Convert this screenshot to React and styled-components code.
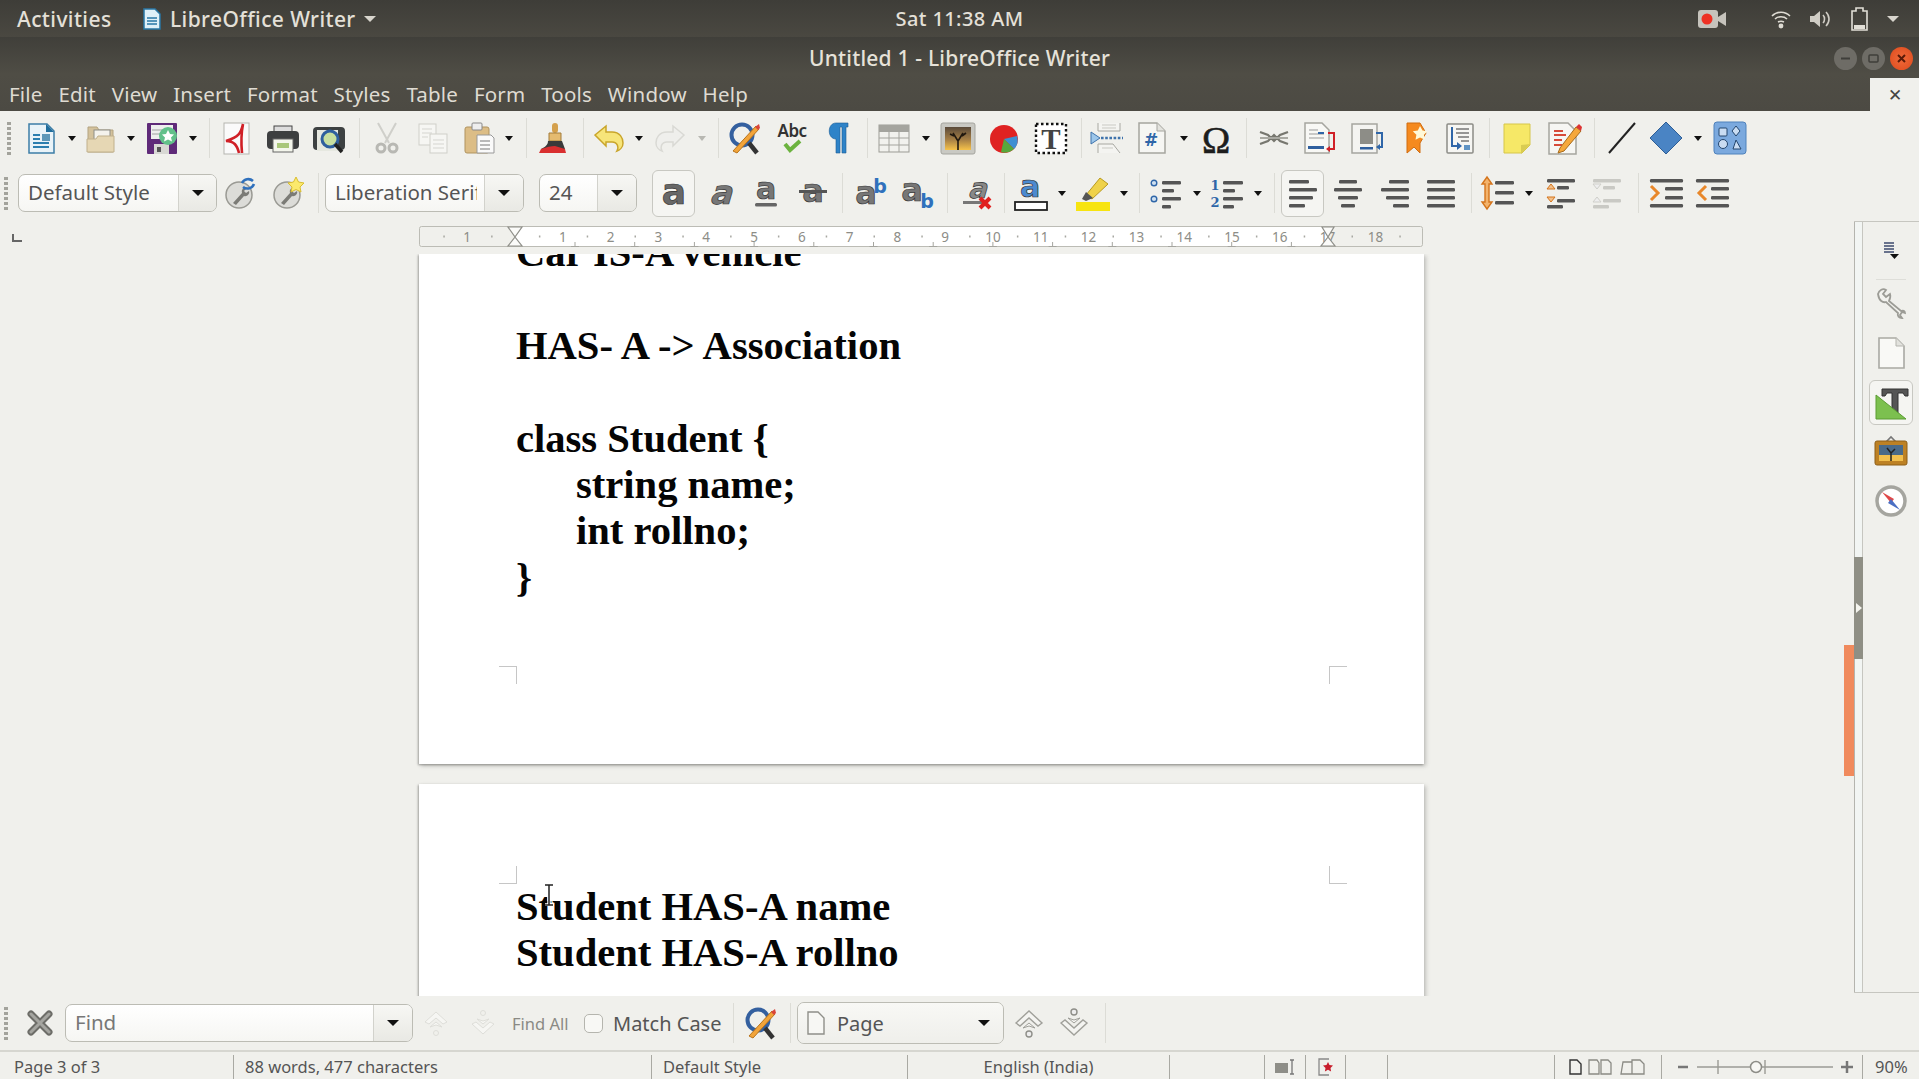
import React from "react";
import styled, { createGlobalStyle } from "styled-components";

const UI_FONT = `"Noto Sans", "Open Sans", sans-serif`;

const GlobalStyle = createGlobalStyle`
  html, body { margin: 0; padding: 0; background: #f0f0ec; }
  body { font-family: ${UI_FONT}; }
`;

const Screen = styled.div`
  width: 1919px;
  height: 1079px;
  display: flex;
  flex-direction: column;
  overflow: hidden;
  background: #f0f0ec;
`;

const TopBar = styled.div`
  height: 37px;
  flex: none;
  position: relative;
  display: flex;
  align-items: center;
  background: linear-gradient(#3e3d38, #4a4841);
  color: #e4e0d8;
  font-size: 21px;
  font-weight: 500;
  letter-spacing: 0.4px;
`;
const Activities = styled.div`
  margin-left: 17px;
  width: 125px;
`;
const AppMenu = styled.div`
  display: flex;
  align-items: center;
  gap: 8px;
`;
const Clock = styled.div`
  position: absolute;
  left: 0;
  right: 0;
  top: 5px;
  text-align: center;
  font-size: 20px;
`;
const Tray = styled.div`
  margin-left: auto;
  display: flex;
  align-items: center;
  padding-right: 20px;
`;
const TrayItem = styled.div`
  margin-left: ${(p) => p.$gap}px;
  display: flex;
`;
const DownArrow = styled.div`
  width: 0;
  height: 0;
  border-left: ${(p) => p.$size}px solid transparent;
  border-right: ${(p) => p.$size}px solid transparent;
  border-top: ${(p) => p.$size}px solid ${(p) => p.$color || "#d8d5cd"};
`;

const WindowHead = styled.div`
  flex: none;
  background: linear-gradient(#403f3a, #4f4d45 50%, #4c4a43);
  position: relative;
  height: 74px;
  display: flex;
  flex-direction: column;
`;
const TitleRow = styled.div`
  height: 41px;
  display: flex;
  align-items: center;
  justify-content: center;
  color: #e6e2d9;
  font-size: 21px;
  font-weight: 500;
  letter-spacing: 0.2px;
`;
const WinButtons = styled.div`
  position: absolute;
  top: 10px;
  left: 1834px;
  display: flex;
  gap: 5px;
`;
const WinButton = styled.div`
  width: 23px;
  height: 23px;
  border-radius: 50%;
  background: ${(p) => (p.$close ? "radial-gradient(#f06a3a, #dd4a1c)" : "#6e6c66")};
  display: flex;
  align-items: center;
  justify-content: center;
`;
const MenuRow = styled.div`
  height: 33px;
  display: flex;
  align-items: center;
  padding: 0 0 2px 9px;
  box-sizing: border-box;
  gap: 15.8px;
  color: #dfdbd2;
  font-size: 20.5px;
  letter-spacing: 0.2px;
`;
const CloseTab = styled.div`
  position: absolute;
  right: 0;
  bottom: 0;
  width: 49px;
  height: 33px;
  background: #f0f0ec;
  color: #444;
  display: flex;
  align-items: center;
  justify-content: center;
  font-size: 17px;
`;

const ToolStrip = styled.div`
  height: ${(p) => p.$h}px;
  flex: none;
  display: flex;
  align-items: center;
`;
const Slot = styled.div`
  flex: none;
  width: ${(p) => p.$w}px;
  margin-left: ${(p) => p.$gap}px;
  display: flex;
  align-items: center;
  justify-content: center;
  box-sizing: border-box;
  ${(p) =>
    p.$active &&
    `height: 47px;
     border: 1.5px solid #c8c8c2;
     border-radius: 6px;
     background: #f5f5f2;`}
`;
const Separator = styled.div`
  flex: none;
  width: 1px;
  height: 40px;
  margin-left: ${(p) => p.$gap}px;
  background: #dcdcd6;
`;
const Grip = styled.div`
  flex: none;
  width: 4px;
  height: 33px;
  margin-left: ${(p) => p.$gap}px;
  background: repeating-linear-gradient(#a3a39c 0 3px, transparent 3px 5px);
`;
const Caret = styled.div`
  flex: none;
  margin-left: ${(p) => p.$gap}px;
  width: 0;
  height: 0;
  border-left: 4px solid transparent;
  border-right: 4px solid transparent;
  border-top: 5px solid ${(p) => (p.$dim ? "#b8b8b2" : "#111")};
`;
const Combo = styled.div`
  flex: none;
  width: ${(p) => p.$w}px;
  height: ${(p) => p.$h || 38}px;
  margin-left: ${(p) => p.$gap}px;
  box-sizing: border-box;
  display: flex;
  border: 1.5px solid #bcbcb4;
  border-radius: 7px;
  background: linear-gradient(#ffffff, #f6f6f3);
  overflow: hidden;
  font-size: 20.5px;
  color: ${(p) => (p.$muted ? "#777" : "#555")};
`;
const ComboValue = styled.div`
  flex: 1;
  min-width: 0;
  margin-left: ${(p) => p.$pad}px;
  margin-right: ${(p) => p.$clip || 0}px;
  white-space: nowrap;
  overflow: hidden;
  line-height: 35px;
`;
const ComboButton = styled.div`
  flex: none;
  width: ${(p) => p.$w}px;
  display: flex;
  align-items: center;
  justify-content: center;
  border-left: 1.5px solid #d2d2cc;
  background: linear-gradient(#f7f7f4, #e9e9e4);
`;
const PageChoice = styled.div`
  display: flex;
  align-items: center;
  flex: 1;
  padding: 0 13px 0 9px;
  gap: 12px;
  font-size: 20px;
  background: linear-gradient(#f8f8f5, #efefeb);
`;
const PushRight = styled.div`
  margin-left: auto;
  display: flex;
`;
const FindLabel = styled.div`
  flex: none;
  margin-left: ${(p) => p.$gap}px;
  width: ${(p) => p.$w}px;
  font-size: ${(p) => p.$size}px;
  color: ${(p) => p.$color};
  white-space: nowrap;
`;
const CheckBox = styled.div`
  flex: none;
  margin-left: ${(p) => p.$gap}px;
  width: ${(p) => p.$w}px;
  height: 19px;
  box-sizing: border-box;
  border: 1.5px solid #b5b5ae;
  border-radius: 5px;
  background: #f8f8f5;
`;

const Lower = styled.div`
  flex: none;
  height: 775px;
  display: flex;
`;
const MainColumn = styled.div`
  width: 1854px;
  display: flex;
  flex-direction: column;
`;
const RulerRow = styled.div`
  height: 33px;
  flex: none;
  display: flex;
  align-items: flex-start;
  padding-top: 5px;
  box-sizing: border-box;
`;
const TabCorner = styled.div`
  width: 8px;
  height: 6px;
  margin: 8px 0 0 12px;
  border-left: 2px solid #666;
  border-bottom: 2px solid #666;
`;
const RulerBox = styled.div`
  margin-left: 397px;
  width: 1004px;
  height: 21px;
`;
const DocArea = styled.div`
  flex: 1;
  position: relative;
  overflow: hidden;
  padding-left: 419px;
  display: flex;
  flex-direction: column;
  gap: 20px;
`;
const Page = styled.div`
  flex: none;
  width: 1005px;
  height: ${(p) => p.$h}px;
  padding-left: 97px;
  box-sizing: border-box;
  position: relative;
  background: #fff;
  box-shadow: -1px 1px 2px rgba(90, 90, 85, 0.5), 2px 2px 4px rgba(90, 90, 85, 0.3);
  font-family: "Liberation Serif", "Times New Roman", serif;
  font-weight: 700;
  font-size: 40.6px;
  line-height: 46.4px;
  color: #050505;
`;
const PageText = styled.div`
  margin-top: ${(p) => p.$top}px;
  ${(p) => p.$clip && "clip-path: inset(24px 0 0 0);"}
`;
const Line = styled.div`
  height: 46.4px;
  white-space: pre;
  padding-left: ${(p) => (p.$indent ? 60 : 0)}px;
`;
const CropMark = styled.div`
  position: absolute;
  width: 17px;
  height: 17px;
  left: ${(p) => p.$x}px;
  top: ${(p) => p.$y}px;
  ${(p) => p.$sides.map((s) => `border-${s}: 1.5px solid #c6c6c6;`).join("")}
`;
const TextCursor = styled.div`
  position: absolute;
  left: 125px;
  top: 100px;
  display: flex;
`;
const OrangeThumb = styled.div`
  position: absolute;
  right: 0;
  top: 391px;
  width: 10px;
  height: 131px;
  background: #f08a5d;
`;

const SidePanel = styled.div`
  flex: 1;
  height: 772px;
  display: flex;
  border-top: 1.5px solid #c6c6c0;
  border-bottom: 1.5px solid #c6c6c0;
  box-sizing: border-box;
`;
const SideStrip = styled.div`
  width: 9px;
  box-sizing: border-box;
  border-left: 1.5px solid #b4b4ae;
  border-right: 1.5px solid #c6c6c0;
  background: #f2f5f3;
  padding-top: 335px;
`;
const SideHandle = styled.div`
  height: 102px;
  margin: 0 -1px;
  background: #8f8f85;
  display: flex;
  align-items: center;
  justify-content: center;
`;
const HandleArrow = styled.div`
  width: 0;
  height: 0;
  border-top: 5px solid transparent;
  border-bottom: 5px solid transparent;
  border-left: 6px solid #f5f5ef;
`;
const SideDeck = styled.div`
  flex: 1;
  display: flex;
  flex-direction: column;
  align-items: center;
`;
const DeckItem = styled.div`
  flex: none;
  width: 44px;
  height: 45px;
  margin-top: ${(p) => p.$gap}px;
  display: flex;
  align-items: center;
  justify-content: center;
  box-sizing: border-box;
  ${(p) =>
    p.$active &&
    `border: 1.5px solid #c8c8c2;
     border-radius: 6px;
     background: #f5f5f2;`}
`;
const DeckRule = styled.div`
  width: 30px;
  height: 1px;
  margin-top: 7px;
  background: #deded9;
`;

const StatusBar = styled.div`
  flex: none;
  height: 29px;
  box-sizing: border-box;
  border-top: 2px solid #d6d6d0;
  display: grid;
  grid-template-columns: 233px 418px 256px 262px 95px 41px 40px 42px 167px 107px 201px 1fr;
  font-size: 16.5px;
  color: #555;
`;
const StatusCell = styled.div`
  display: flex;
  align-items: center;
  justify-content: ${(p) => (p.$center ? "center" : "flex-start")};
  padding-left: ${(p) => p.$pad || 0}px;
  padding-bottom: 2px;
  white-space: nowrap;
  border-left: ${(p) => (p.$first ? "none" : "1.5px solid #a9a9a3")};
  margin-top: 3px;
  box-sizing: border-box;
`;

const Ic = ({ children }) => (
  <svg width="32" height="32" viewBox="0 0 32 32" style={{ overflow: "visible" }}>
    {children}
  </svg>
);

const glyph = { fontFamily: "DejaVu Sans, sans-serif", fontWeight: 700 };

const Letter = ({ size = 36, y = 27, x = 16, fill = "#686868", children, slant }) => (
  <text
    x={x}
    y={y}
    textAnchor="middle"
    fontSize={size}
    fill={fill}
    stroke="#333"
    strokeWidth="0.7"
    transform={slant ? `translate(${y * 0.29} 0) skewX(-16)` : undefined}
    {...glyph}
  >
    {children}
  </text>
);

const Bars = ({ rows, fill = "#555", h = 3.4 }) =>
  rows.map(([x, y, w], i) => <rect key={i} x={x} y={y} width={w} height={h} rx="1.2" fill={fill} />);

const icons = {
  NewDoc: () => (
    <Ic>
      <path d="M4 2h18l7 7v22H4z" fill="#e9f3f8" stroke="#3d7ea6" strokeWidth="1.5" />
      <path d="M21 2l8 8h-8z" fill="#1f6d9c" />
      <path d="M8 13h7M8 17h7M8 21h16M8 25h16" stroke="#2c7fb0" strokeWidth="2" />
      <rect x="17" y="12" width="8" height="7" fill="#5d97b8" />
    </Ic>
  ),
  Open: () => (
    <Ic>
      <path d="M3 5h9l2 3h14v22H3z" fill="#d4c29c" stroke="#b3a380" />
      <rect x="9" y="8" width="16" height="12" fill="#f4f2ec" stroke="#8d8d86" />
      <path d="M2 17h9l2-3h16v16H2z" fill="#e6d7b4" stroke="#c0b08c" />
    </Ic>
  ),
  Save: () => (
    <Ic>
      <rect x="1" y="1" width="30" height="31" rx="1" fill="#5f2a79" />
      <rect x="5" y="3" width="22" height="14" fill="#eee" />
      <path d="M6 8h15M6 12h15" stroke="#bbb" strokeWidth="1.5" />
      <rect x="8" y="22" width="15" height="10" fill="#d8d8d4" />
      <rect x="11" y="25" width="4" height="5" fill="#555" />
      <circle cx="22" cy="14" r="9" fill="#62c08a" />
      <path d="M22 8l2 4 4 .5-3 3 1 4-4-2-4 2 1-4-3-3 4-.5z" fill="#fff" />
    </Ic>
  ),
  Pdf: () => (
    <Ic>
      <rect x="4" y="1" width="25" height="31" fill="#fafafa" stroke="#b5b5b0" />
      <path d="M23 2C21 11 19 15 6 19c8 0 11 4 13 12M23 2c-2 10-2 18-1 29" fill="none" stroke="#d02027" strokeWidth="2.6" />
    </Ic>
  ),
  Print: () => (
    <Ic>
      <rect x="7" y="4" width="18" height="8" fill="#ddd" stroke="#444" />
      <rect x="0" y="9" width="32" height="18" rx="4" fill="#3d3f40" />
      <rect x="6" y="17" width="20" height="13" fill="#f4f6ec" stroke="#666" />
      <rect x="10" y="21" width="12" height="5" fill="#a9c77a" />
    </Ic>
  ),
  Preview: () => (
    <Ic>
      <rect x="0" y="5" width="32" height="23" rx="4" fill="#3d4142" />
      <rect x="4" y="8" width="21" height="21" fill="#e6e8e0" />
      <circle cx="17" cy="17" r="8" fill="#c8dfa0" stroke="#2f5f9e" strokeWidth="3" />
      <path d="M22 22l7 8" stroke="#222" strokeWidth="3.5" />
    </Ic>
  ),
  Cut: () => (
    <Ic>
      <path d="M7 1l11 20M25 1L14 21" stroke="#cfcfca" strokeWidth="2" />
      <circle cx="10" cy="26" r="4" fill="none" stroke="#b8b8b3" strokeWidth="3" />
      <circle cx="22" cy="26" r="4" fill="none" stroke="#b8b8b3" strokeWidth="3" />
    </Ic>
  ),
  Copy: () => (
    <Ic>
      <rect x="2" y="2" width="17" height="21" fill="#f6f6f3" stroke="#cfcfc9" />
      <rect x="13" y="12" width="17" height="19" fill="#f6f6f3" stroke="#cfcfc9" />
      <path d="M5 7h10M5 11h10M5 15h6M16 18h11M16 22h11M16 26h11" stroke="#d5d5d0" />
    </Ic>
  ),
  Paste: () => (
    <Ic>
      <rect x="2" y="5" width="24" height="26" rx="2" fill="#dcbd86" stroke="#b0935f" />
      <rect x="9" y="1" width="10" height="7" rx="1" fill="#eee" stroke="#888" />
      <path d="M14 13h14l3 3v15H14z" fill="#fafafa" stroke="#999" />
      <path d="M17 19h10M17 23h10M17 27h10" stroke="#777" />
    </Ic>
  ),
  Brush: () => (
    <Ic>
      <rect x="14" y="1" width="6" height="10" rx="3" fill="#d4a04c" />
      <path d="M11 11h12v8H11z" fill="#e5bb70" stroke="#a37c3b" />
      <path d="M10 19h14l3 8H3c4-2 7-4 7-8z" fill="#3a3a3a" />
      <path d="M3 27c6-2 10-3 14-3l10 3 1 4H1z" fill="#d92f2f" />
    </Ic>
  ),
  Undo: () => (
    <Ic>
      <path d="M2 13L13 4v6h6c8 0 11 6 11 11 0 4-3 7-6 8 2-3 1-9-5-9h-6v4z" fill="#f7e57a" stroke="#c9a52a" strokeWidth="1.5" />
    </Ic>
  ),
  Redo: () => (
    <Ic>
      <path d="M30 13L19 4v6h-6C5 10 2 16 2 21c0 4 3 7 6 8-2-3-1-9 5-9h6v4z" fill="#efefec" stroke="#d9d9d4" strokeWidth="1.5" />
    </Ic>
  ),
  Find: () => (
    <Ic>
      <circle cx="13" cy="13" r="10.5" fill="none" stroke="#34609f" strokeWidth="4" />
      <path d="M20 21l8 10" stroke="#333" strokeWidth="4.5" />
      <path d="M4 29L27 4l3 3L8 31z" fill="#f2a43a" stroke="#b8741c" />
      <path d="M26 5l4-3 1 4-2 2z" fill="#d9453a" />
    </Ic>
  ),
  Abc: () => (
    <Ic>
      <text x="16" y="15" textAnchor="middle" fontSize="17" letterSpacing="-0.6" fill="#333" fontFamily="Noto Sans, sans-serif" fontWeight="600">
        Abc
      </text>
      <path d="M9 22l5 6 10-9" fill="none" stroke="#6cb33f" strokeWidth="4" />
    </Ic>
  ),
  Pilcrow: () => (
    <Ic>
      <path d="M14 1h12v4h-2v26h-4V5h-2v26h-4V17C5 17 5 1 14 1z" fill="#2e83c8" stroke="#1b5c96" strokeWidth="0.6" />
    </Ic>
  ),
  Table: () => (
    <Ic>
      <rect x="1" y="3" width="30" height="27" fill="#f2f2ee" stroke="#9b9b95" />
      <rect x="1" y="3" width="30" height="7" fill="#a4a49e" />
      <path d="M1 16h30M1 23h30M11 3v27M21 3v27" stroke="#a4a49e" />
    </Ic>
  ),
  Image: () => (
    <Ic>
      <defs>
        <linearGradient id="dusk" x1="0" y1="0" x2="0" y2="1">
          <stop offset="0" stopColor="#5a4a3a" />
          <stop offset="0.55" stopColor="#a67f45" />
          <stop offset="1" stopColor="#f6c24a" />
        </linearGradient>
      </defs>
      <rect x="-1" y="1" width="34" height="31" rx="2" fill="#c9c9c3" stroke="#a5a59f" />
      <rect x="3" y="5" width="26" height="23" fill="url(#dusk)" />
      <path d="M16 28v-9l-5-8M16 19l5-8M12 14l-4-2M20 14l4-3" stroke="#20180f" strokeWidth="1.6" fill="none" />
    </Ic>
  ),
  Chart: () => (
    <Ic>
      <circle cx="16" cy="17" r="14" fill="#df2222" />
      <path d="M16 17l13-3c2 7-1 11-3 13z" fill="#3f8fd2" />
      <path d="M16 17l10 10c-2 2-8 5-13 3z" fill="#57a83c" />
    </Ic>
  ),
  TextBox: () => (
    <Ic>
      <rect x="1" y="2" width="30" height="29" fill="#fff" stroke="#111" strokeWidth="2.4" strokeDasharray="2.5 2.5" />
      <text x="16" y="27" textAnchor="middle" fontSize="29" fontWeight="700" fill="#444" fontFamily="Liberation Serif, serif">
        T
      </text>
    </Ic>
  ),
  PageBreak: () => (
    <Ic>
      <path d="M7 1v8h22V1" fill="#f4f4f1" stroke="#a8a8a2" />
      <path d="M11 3h14M11 6h14" stroke="#c9c9c3" />
      <path d="M7 31v-9h15l7 9" fill="#f4f4f1" stroke="#a8a8a2" />
      <path d="M11 26h11" stroke="#c9c9c3" />
      <path d="M10 16h22" stroke="#3f73ac" strokeWidth="2.4" strokeDasharray="2.6 1.6" />
      <path d="M0 10l9 6-9 6z" fill="#9cc6ea" stroke="#3f73ac" />
    </Ic>
  ),
  Field: () => (
    <Ic>
      <path d="M3 1h18l8 8v22H3z" fill="#f6f6f3" stroke="#a5a59f" strokeWidth="1.5" />
      <path d="M21 1v8h8" fill="#e3e3de" stroke="#a5a59f" />
      <text x="15" y="24" textAnchor="middle" fontSize="17" fill="#2f66a8" fontWeight="700" fontFamily="DejaVu Sans, sans-serif">
        #
      </text>
    </Ic>
  ),
  Omega: () => (
    <Ic>
      <text x="16" y="31" textAnchor="middle" fontSize="38" fill="#1d1d1d" stroke="#1d1d1d" strokeWidth="0.6" fontFamily="Liberation Serif, serif">
        Ω
      </text>
    </Ic>
  ),
  Link: () => (
    <Ic>
      <path d="M2 10l8 3 6 6 6-6 8-3M2 22l8-3 6-6 6 6 8 3" fill="none" stroke="#77776f" strokeWidth="2.2" />
      <path d="M2 16h28" stroke="#a9a9a2" strokeWidth="2" />
    </Ic>
  ),
  Footnote: () => (
    <Ic>
      <path d="M1 1h17l7 7v23H1z" fill="#f8f8f5" stroke="#a5a59f" strokeWidth="1.5" />
      <path d="M5 8h9M5 12h15M5 16h15" stroke="#999" />
      <rect x="14" y="10" width="6" height="2" fill="#2f66a8" />
      <rect x="4" y="24" width="16" height="3" fill="#2f5f9e" />
      <path d="M24 11h6v16h-5" fill="none" stroke="#d02027" strokeWidth="2" />
      <path d="M22 27l4-3v6z" fill="#d02027" />
    </Ic>
  ),
  Endnote: () => (
    <Ic>
      <rect x="1" y="2" width="25" height="29" fill="#f4f4f1" stroke="#a5a59f" strokeWidth="1.5" />
      <rect x="9" y="7" width="13" height="15" fill="#8d8d87" />
      <rect x="9" y="25" width="13" height="2.5" fill="#2f5f9e" />
      <path d="M25 11h6v14h-4" fill="none" stroke="#2f66a8" strokeWidth="2" />
      <path d="M25 25l4-3v6z" fill="#2f66a8" />
    </Ic>
  ),
  Bookmark: () => (
    <Ic>
      <path d="M6 1h13l6 10-6 10v10l-6-6-7 6z" fill="#f58a1f" stroke="#d06c10" />
      <path d="M19 4l2.5 4.5 5 .8-3.6 3.5.9 5-4.8-2.4-4.5 2.4.9-5-3.6-3.5 5-.8z" fill="#fff9d8" />
    </Ic>
  ),
  CrossRef: () => (
    <Ic>
      <rect x="3" y="2" width="26" height="29" rx="1" fill="#f6f6f3" stroke="#8c8c87" strokeWidth="1.5" />
      <path d="M12 7h13M12 11h13M14 15h11M17 19h8" stroke="#777" strokeWidth="1.5" />
      <path d="M8 5v19h6" fill="none" stroke="#2f66a8" strokeWidth="2" />
      <path d="M18 24l-5-4v8z" fill="#2f66a8" />
      <rect x="20" y="23" width="6" height="5" fill="#5f93c4" />
    </Ic>
  ),
  Note: () => (
    <Ic>
      <path d="M3 2h26v21l-8 8H3z" fill="#f6e867" stroke="#d6c64a" />
      <path d="M29 22l-9 1v9z" fill="#d9cc52" />
    </Ic>
  ),
  Track: () => (
    <Ic>
      <path d="M1 1h19l8 8v23H1z" fill="#f6f6f3" stroke="#a5a59f" strokeWidth="1.5" />
      <path d="M6 9h9M6 13h12M6 18h8M6 23h8" stroke="#d64b3a" strokeWidth="2" />
      <path d="M10 31l2-5L28 5l5 4L16 29z" fill="#f5a83c" stroke="#a86c1c" />
      <path d="M28 5l5 4 1-4-3-3z" fill="#d33" />
    </Ic>
  ),
  LineTool: () => (
    <Ic>
      <path d="M3 31L29 1" stroke="#222" strokeWidth="2" />
    </Ic>
  ),
  Diamond: () => (
    <Ic>
      <path d="M16 0l16 16-16 16L0 16z" fill="#4a84c4" stroke="#2e5e96" />
    </Ic>
  ),
  Shapes: () => (
    <Ic>
      <rect x="0" y="0" width="32" height="32" rx="3" fill="#7ba9de" stroke="#4f82bc" />
      <rect x="5" y="6" width="8" height="8" rx="1" fill="#c9dcf2" stroke="#24466e" />
      <path d="M22 4l4 5-4 5-4-5z" fill="#c9dcf2" stroke="#24466e" />
      <circle cx="9" cy="22" r="4.5" fill="#c9dcf2" stroke="#24466e" />
      <path d="M19 27l3-9 5 9z" fill="#c9dcf2" stroke="#24466e" />
    </Ic>
  ),
  StyleUpdate: () => (
    <Ic>
      <circle cx="14" cy="18" r="13" fill="#dcdcd8" stroke="#9a9a94" strokeWidth="1.5" />
      <path d="M8 26l9-10c-1-4 2-6 5-5l-3 3 2 2 3-2c1 3-2 6-5 5l-8 9z" fill="#7b7b76" />
      <path d="M17 6a7 7 0 0 1 11-2M29 7a7 7 0 0 1-11 3" fill="none" stroke="#2f70bc" strokeWidth="2.5" />
    </Ic>
  ),
  StyleNew: () => (
    <Ic>
      <circle cx="14" cy="18" r="13" fill="#dcdcd8" stroke="#9a9a94" strokeWidth="1.5" />
      <path d="M8 26l9-10c-1-4 2-6 5-5l-3 3 2 2 3-2c1 3-2 6-5 5l-8 9z" fill="#7b7b76" />
      <path d="M23 0l2.5 5 5.5 1-4 4 1 5-5-2.500-5 2.500 1-5-4-4 5.500-1z" fill="#fbe96c" stroke="#d9bd30" />
    </Ic>
  ),
  Bold: () => (
    <Ic>
      <Letter>a</Letter>
    </Ic>
  ),
  Italic: () => (
    <Ic>
      <Letter slant size={33} fill="#777">a</Letter>
    </Ic>
  ),
  Under: () => (
    <Ic>
      <Letter size={30} y={22} fill="#777">a</Letter>
      <rect x="5" y="26" width="22" height="3.4" rx="1.5" fill="#666" />
    </Ic>
  ),
  Strike: () => (
    <Ic>
      <Letter size={32} y={25} fill="#777">a</Letter>
      <rect x="2" y="13" width="28" height="3" fill="#555" />
    </Ic>
  ),
  Super: () => (
    <Ic>
      <Letter size={32} x={12} y={27} fill="#777">a</Letter>
      <text x="26" y="16" textAnchor="middle" fontSize="19" fill="#2f70bc" {...glyph}>b</text>
    </Ic>
  ),
  Sub: () => (
    <Ic>
      <Letter size={32} x={12} y={24} fill="#777">a</Letter>
      <text x="27" y="31" textAnchor="middle" fontSize="19" fill="#2f70bc" {...glyph}>b</text>
    </Ic>
  ),
  Clear: () => (
    <Ic>
      <Letter slant size={28} y={21} fill="#888">a</Letter>
      <rect x="2" y="24" width="22" height="3" fill="#777" />
      <path d="M19 21l10 10M29 21L19 31" stroke="#e0201f" strokeWidth="4" />
    </Ic>
  ),
  FontColor: () => (
    <Ic>
      <Letter size={30} y={20} fill="#4b8ad0">a</Letter>
      <rect x="1" y="25" width="32" height="8" fill="#fff" stroke="#222" strokeWidth="1.8" />
    </Ic>
  ),
  Highlight: () => (
    <Ic>
      <path d="M10 18L24 1l8 6-16 15z" fill="#efd24a" stroke="#b99a20" />
      <path d="M6 22l4-7 7 6-7 3z" fill="#555" />
      <rect x="0" y="25" width="34" height="9" fill="#f7e410" />
    </Ic>
  ),
  Bullets: () => (
    <Ic>
      <circle cx="5" cy="6" r="2.8" fill="#cfe0f0" stroke="#2f66a8" strokeWidth="1.4" />
      <circle cx="5" cy="22" r="2.8" fill="#cfe0f0" stroke="#2f66a8" strokeWidth="1.4" />
      <Bars rows={[[13, 4, 19], [13, 12, 12], [13, 20, 19], [13, 28, 9]]} />
    </Ic>
  ),
  Numbers: () => (
    <Ic>
      <text x="4" y="13" textAnchor="middle" fontSize="13" fill="#2f66a8" fontWeight="700" fontFamily="DejaVu Serif, serif">1</text>
      <text x="4" y="30" textAnchor="middle" fontSize="13" fill="#2f66a8" fontWeight="700" fontFamily="DejaVu Serif, serif">2</text>
      <Bars rows={[[12, 4, 20], [12, 12, 12], [12, 20, 20], [12, 28, 11]]} />
    </Ic>
  ),
  AlignLeft: () => (
    <Ic>
      <Bars rows={[[2, 3, 20], [2, 11, 28], [2, 19, 24], [2, 27, 16]]} />
    </Ic>
  ),
  AlignCenter: () => (
    <Ic>
      <Bars rows={[[7, 3, 18], [2, 11, 28], [6, 19, 20], [9, 27, 14]]} />
    </Ic>
  ),
  AlignRight: () => (
    <Ic>
      <Bars rows={[[10, 3, 20], [2, 11, 28], [7, 19, 23], [14, 27, 16]]} />
    </Ic>
  ),
  Justify: () => (
    <Ic>
      <Bars rows={[[2, 3, 28], [2, 11, 28], [2, 19, 28], [2, 27, 28]]} />
    </Ic>
  ),
  LineSpace: () => (
    <Ic>
      <path d="M6 0l5 7H8v18h3l-5 7-5-7h3V7H1z" fill="#f3b36c" stroke="#d4741c" strokeWidth="1.4" />
      <Bars rows={[[14, 4, 19], [14, 14, 19], [14, 24, 19]]} />
    </Ic>
  ),
  SpaceInc: () => (
    <Ic>
      <Bars rows={[[2, 2, 28], [12, 9, 12], [12, 22, 18], [2, 28, 16]]} />
      <path d="M6 7l4 5H2zM6 25l4-5H2z" fill="#f3c08a" stroke="#d4741c" />
    </Ic>
  ),
  SpaceDec: () => (
    <Ic>
      <Bars fill="#c9c9c4" rows={[[2, 2, 28], [12, 9, 12], [12, 22, 18], [2, 28, 16]]} />
      <path d="M6 12l4-5H2zM6 20l4 5H2z" fill="#eee" stroke="#cfcfca" />
    </Ic>
  ),
  Indent: () => (
    <Ic>
      <Bars rows={[[0, 2, 33], [15, 10, 18], [15, 19, 18], [0, 27, 33]]} />
      <path d="M1 9l7 7-7 7" fill="none" stroke="#e8872a" strokeWidth="3" />
    </Ic>
  ),
  Outdent: () => (
    <Ic>
      <Bars rows={[[0, 2, 33], [15, 10, 18], [15, 19, 18], [0, 27, 33]]} />
      <path d="M10 9l-7 7 7 7" fill="none" stroke="#e8872a" strokeWidth="3" />
    </Ic>
  ),
  CloseX: () => (
    <Ic>
      <path d="M7 7l18 18M25 7L7 25" stroke="#6d6d68" strokeWidth="7" strokeLinecap="round" />
      <path d="M7 7l18 18M25 7L7 25" stroke="#a5a5a0" strokeWidth="3" strokeLinecap="round" />
    </Ic>
  ),
  ArrowUpDim: () => (
    <Ic>
      <path d="M5 15L16 5l11 10-4 2-7-6-7 6z" fill="#f6f6f3" stroke="#deded9" />
      <path d="M10 20l6-5 6 5-6-2z" fill="#f6f6f3" stroke="#deded9" />
      <circle cx="16" cy="26" r="2.5" fill="none" stroke="#deded9" />
    </Ic>
  ),
  ArrowDownDim: () => (
    <Ic>
      <circle cx="16" cy="6" r="2.5" fill="none" stroke="#deded9" />
      <path d="M10 12l6 5 6-5-6 2z" fill="#f6f6f3" stroke="#deded9" />
      <path d="M5 17l11 10 11-10-4-2-7 6-7-6z" fill="#f6f6f3" stroke="#deded9" />
    </Ic>
  ),
  ArrowUp: () => (
    <Ic>
      <path d="M3 16L16 4l13 12-4 3-9-8-9 8z" fill="#f4f4f1" stroke="#a0a09a" strokeWidth="1.4" />
      <path d="M10 21l6-5 6 5-6-2z" fill="#f4f4f1" stroke="#a0a09a" />
      <circle cx="16" cy="27" r="3" fill="#eee" stroke="#8f8f89" strokeWidth="1.4" />
    </Ic>
  ),
  ArrowDown: () => (
    <Ic>
      <circle cx="16" cy="5" r="3" fill="#eee" stroke="#8f8f89" strokeWidth="1.4" />
      <path d="M10 11l6 5 6-5-6 2z" fill="#f4f4f1" stroke="#a0a09a" />
      <path d="M3 16l13 12 13-12-4-3-9 8-9-8z" fill="#f4f4f1" stroke="#a0a09a" strokeWidth="1.4" />
    </Ic>
  ),
};

// every item is [kind, left edge, right edge, extra], lifted straight off the screenshot
const ROW_ONE = [
  ["grip", 7, 11], ["NewDoc", 28, 53], ["caret", 68, 76], ["Open", 87, 115], ["caret", 127, 135],
  ["Save", 146, 177], ["caret", 189, 197], ["sep", 209, 210], ["Pdf", 223, 249], ["Print", 267, 298],
  ["Preview", 313, 345], ["sep", 359, 360], ["Cut", 375, 399], ["Copy", 418, 447], ["Paste", 464, 493],
  ["caret", 505, 513], ["sep", 526, 527], ["Brush", 538, 569], ["sep", 583, 584], ["Undo", 593, 624],
  ["caret", 635, 643], ["Redo", 654, 685], ["dimcaret", 698, 706], ["sep", 718, 719], ["Find", 729, 761],
  ["Abc", 776, 807], ["Pilcrow", 828, 848], ["sep", 867, 868], ["Table", 879, 909], ["caret", 922, 930],
  ["Image", 941, 974], ["Chart", 990, 1018], ["TextBox", 1035, 1066], ["sep", 1081, 1082],
  ["PageBreak", 1090, 1124], ["Field", 1138, 1166], ["caret", 1180, 1188], ["Omega", 1201, 1231],
  ["sep", 1246, 1247], ["Link", 1259, 1289], ["Footnote", 1304, 1335], ["Endnote", 1350, 1383],
  ["Bookmark", 1405, 1428], ["CrossRef", 1447, 1472], ["sep", 1489, 1490], ["Note", 1504, 1530],
  ["Track", 1547, 1580], ["sep", 1594, 1595], ["LineTool", 1609, 1634], ["Diamond", 1651, 1681],
  ["caret", 1694, 1702], ["Shapes", 1714, 1745],
];

const ROW_TWO = [
  ["grip", 4, 8],
  ["combo", 18, 217, { text: "Default Style", button: 37, pad: 9 }],
  ["StyleUpdate", 227, 255], ["StyleNew", 273, 304], ["sep", 318, 319],
  ["combo", 325, 524, { text: "Liberation Serif", button: 38, pad: 9, clip: 7 }],
  ["combo", 539, 637, { text: "24", button: 38, pad: 9 }],
  ["Bold", 652, 695, { active: true }], ["Italic", 709, 731], ["Under", 755, 777], ["Strike", 798, 827],
  ["sep", 842, 843], ["Super", 853, 886], ["Sub", 899, 933], ["sep", 947, 948], ["Clear", 961, 992],
  ["sep", 1004, 1005], ["FontColor", 1013, 1047], ["caret", 1058, 1066], ["Highlight", 1075, 1109],
  ["caret", 1120, 1128], ["sep", 1139, 1140], ["Bullets", 1149, 1181], ["caret", 1193, 1201],
  ["Numbers", 1211, 1243], ["caret", 1254, 1262], ["sep", 1274, 1275],
  ["AlignLeft", 1281, 1324, { active: true }], ["AlignCenter", 1334, 1362], ["AlignRight", 1380, 1409],
  ["Justify", 1427, 1455], ["sep", 1471, 1472], ["LineSpace", 1480, 1513], ["caret", 1525, 1533],
  ["SpaceInc", 1547, 1575], ["SpaceDec", 1593, 1621], ["sep", 1638, 1639], ["Indent", 1649, 1682],
  ["Outdent", 1695, 1728],
];

const FIND_ROW = [
  ["grip", 4, 8], ["CloseX", 28, 51],
  ["combo", 65, 413, { text: "Find", button: 38, pad: 9, muted: true }],
  ["ArrowUpDim", 422, 449], ["ArrowDownDim", 469, 496],
  ["label", 512, 568, { text: "Find All", size: 16.5, color: "#8a8a84" }],
  ["check", 584, 603],
  ["label", 613, 722, { text: "Match Case", size: 20, color: "#555" }],
  ["sep", 733, 734], ["Find", 745, 777], ["sep", 790, 791],
  ["pagecombo", 797, 1004],
  ["ArrowUp", 1015, 1042], ["ArrowDown", 1060, 1088], ["sep", 1105, 1106],
];

function ToolRow({ items, height }) {
  let last = 0;
  return (
    <ToolStrip $h={height}>
      {items.map(([kind, from, to, extra = {}], i) => {
        const gap = from - last;
        const w = to - from;
        last = to;
        if (kind === "grip") return <Grip key={i} $gap={gap} />;
        if (kind === "sep") return <Separator key={i} $gap={gap} />;
        if (kind === "caret") return <Caret key={i} $gap={gap} />;
        if (kind === "dimcaret") return <Caret key={i} $gap={gap} $dim />;
        if (kind === "check") return <CheckBox key={i} $gap={gap} $w={w} />;
        if (kind === "label")
          return (
            <FindLabel key={i} $gap={gap} $w={w} $size={extra.size} $color={extra.color}>
              {extra.text}
            </FindLabel>
          );
        if (kind === "combo")
          return (
            <Combo key={i} $gap={gap} $w={w} $muted={extra.muted}>
              <ComboValue $pad={extra.pad} $clip={extra.clip}>{extra.text}</ComboValue>
              <ComboButton $w={extra.button}>
                <DownArrow $size={6} $color="#111" />
              </ComboButton>
            </Combo>
          );
        if (kind === "pagecombo")
          return (
            <Combo key={i} $gap={gap} $w={w} $h={42}>
              <PageChoice>
                <svg width="18" height="24" viewBox="0 0 18 24">
                  <path d="M1 1h10l6 6v16H1z" fill="#f7f7f4" stroke="#8f8f89" strokeWidth="1.4" />
                </svg>
                Page
                <PushRight>
                  <DownArrow $size={6} $color="#111" />
                </PushRight>
              </PageChoice>
            </Combo>
          );
        const Icon = icons[kind];
        return (
          <Slot key={i} $gap={gap} $w={w} $active={extra.active}>
            <Icon />
          </Slot>
        );
      })}
    </ToolStrip>
  );
}

const RULER_NUMBERS = Array.from({ length: 18 }, (_, i) => i + 1);
const RULER_STOPS = Array.from({ length: 13 }, (_, i) => 156 + i * 59.7);
const RULER_ZERO = 96;
const RULER_STEP = 47.8;

function Ruler() {
  return (
    <RulerBox>
      <svg width="1004" height="21" viewBox="0 0 1004 21">
        <rect x="0.5" y="0.5" width="1003" height="20" rx="2" fill="#f0f0ec" stroke="#bcbcb5" />
        <rect x="96" y="1" width="813" height="19" fill="#fff" />
        <text x="48" y="15.5" textAnchor="middle" fontSize="13.5" fill="#8d8d87" fontFamily="Noto Sans, sans-serif">1</text>
        {RULER_NUMBERS.map((n) => (
          <text key={n} x={RULER_ZERO + RULER_STEP * n} y="15.5" textAnchor="middle" fontSize="13.5" fill="#8d8d87" fontFamily="Noto Sans, sans-serif">
            {n}
          </text>
        ))}
        {Array.from({ length: 21 }, (_, i) => (
          <rect key={i} x={RULER_ZERO - RULER_STEP * 1.5 + RULER_STEP * i} y="9.5" width="1.5" height="2" fill="#a8a8a2" />
        ))}
        {RULER_STOPS.map((x) => (
          <path key={x} d={`M${x - 4} 20.5h8M${x} 16v4`} stroke="#a5a59f" fill="none" />
        ))}
        <path d="M89 1h14l-7 10 7 9H89l7-9z" fill="#fbfbf9" stroke="#8f8f89" strokeWidth="1.2" />
        <path d="M903 1h12l-6 10 7 9h-14l7-9z" fill="#fbfbf9" stroke="#8f8f89" strokeWidth="1.2" />
      </svg>
    </RulerBox>
  );
}

const DECK = [
  { gap: 0, icon: "rule" },
  { gap: 0, icon: "wrench" },
  { gap: 4, icon: "page" },
  { gap: 6, icon: "styles", active: true },
  { gap: 3, icon: "gallery" },
  { gap: 5, icon: "compass" },
];

const deckIcons = {
  wrench: () => (
    <Ic>
      <path d="M3 7c1-4 5-6 8-4L8 7l3 3 4-3c1 3 0 5-1 7l12 10c2-1 4 0 4 2l-3-1-2 3 2 3c-3 0-5-2-4-5L11 15c-3 1-7-1-8-8z" fill="#f2f2ee" stroke="#9c9c96" strokeWidth="1.8" />
    </Ic>
  ),
  page: () => (
    <Ic>
      <path d="M4 2h17l8 8v22H4z" fill="#f9f9f6" stroke="#a9a9a3" strokeWidth="1.6" />
      <path d="M21 2v8h8" fill="#e2e2dd" stroke="#b5b5af" />
    </Ic>
  ),
  styles: () => (
    <Ic>
      <path d="M7 2h26v7h-3l-2-3h-5v23h-6V6h-5l-2 3H7z" fill="#555" stroke="#333" />
      <path d="M1 8l30 24H1z" fill="#7cc04f" stroke="#5a9c32" />
    </Ic>
  ),
  gallery: () => (
    <Ic>
      <path d="M11 7l5-5 5 5" fill="none" stroke="#777" strokeWidth="1.6" />
      <rect x="0" y="6" width="32" height="24" rx="2" fill="#bd8124" stroke="#8e5f16" />
      <rect x="4" y="10" width="24" height="16" fill="#4a6a88" />
      <path d="M4 20h24v6H4z" fill="#f2c04e" />
      <path d="M16 26v-8l-4-5M16 18l4-4" stroke="#222" strokeWidth="1.5" fill="none" />
    </Ic>
  ),
  compass: () => (
    <Ic>
      <circle cx="16" cy="16" r="14" fill="#fff" stroke="#a5a59f" strokeWidth="3.5" />
      <path d="M7 7l12 7-3 4z" fill="#e04848" />
      <path d="M25 25L13 18l3-4z" fill="#4a6fc4" />
    </Ic>
  ),
};

function Sidebar() {
  return (
    <SidePanel>
      <SideStrip>
        <SideHandle>
          <HandleArrow />
        </SideHandle>
      </SideStrip>
      <SideDeck>
        <DeckItem $gap={5}>
          <svg width="20" height="20" viewBox="0 0 20 20">
            <path d="M3 3h10M3 6h10M3 9h10M3 12h10" stroke="#3c4a6e" strokeWidth="1.5" />
            <path d="M9 14h9l-4.5 5z" fill="#111" />
          </svg>
        </DeckItem>
        {DECK.map(({ gap, icon, active }) => {
          if (icon === "rule") return <DeckRule key={icon} />;
          const Icon = deckIcons[icon];
          return (
            <DeckItem key={icon} $gap={gap} $active={active}>
              <Icon />
            </DeckItem>
          );
        })}
      </SideDeck>
    </SidePanel>
  );
}

export default function App() {
  return (
    <Screen>
      <GlobalStyle />
      <TopBar>
        <Activities>Activities</Activities>
        <AppMenu>
          <svg width="20" height="22" viewBox="0 0 20 22">
            <path d="M2 1h11l5 5v15H2z" fill="#dff0f8" stroke="#2a77a5" strokeWidth="1.5" />
            <path d="M5 10h10M5 13h10M5 16h10" stroke="#2a77a5" strokeWidth="1.5" />
          </svg>
          LibreOffice Writer
          <DownArrow $size={6} />
        </AppMenu>
        <Clock>Sat 11:38 AM</Clock>
        <Tray>
          <TrayItem $gap={0}>
            <svg width="28" height="18" viewBox="0 0 28 18">
              <rect x="0" y="0" width="20" height="18" rx="3" fill="#c6c3bc" />
              <path d="M20 7l8-5v14l-8-5z" fill="#c6c3bc" />
              <circle cx="9" cy="9" r="5.5" fill="#ee3124" />
            </svg>
          </TrayItem>
          <TrayItem $gap={44}>
            <svg width="22" height="20" viewBox="0 0 22 20">
              <path d="M2 7c5-5 13-5 18 0M5 10c3-3 9-3 12 0M8 13c2-1 4-1 6 0" fill="none" stroke="#dedbd3" strokeWidth="1.6" />
              <circle cx="11" cy="17" r="2.4" fill="#dedbd3" />
            </svg>
          </TrayItem>
          <TrayItem $gap={17}>
            <svg width="22" height="20" viewBox="0 0 22 20">
              <path d="M1 7h4l6-5v16l-6-5H1z" fill="#cfccc4" />
              <path d="M14 6c2 2 2 6 0 8M17 3c4 4 4 10 0 14" fill="none" stroke="#cfccc4" strokeWidth="1.6" />
            </svg>
          </TrayItem>
          <TrayItem $gap={20}>
            <svg width="17" height="24" viewBox="0 0 17 24">
              <path d="M5 1h7v3h4v19H1V4h4z" fill="none" stroke="#e2dfd7" strokeWidth="1.6" />
              <rect x="3" y="18" width="11" height="4" fill="#e2dfd7" />
            </svg>
          </TrayItem>
          <TrayItem $gap={19}>
            <DownArrow $size={6} />
          </TrayItem>
        </Tray>
      </TopBar>

      <WindowHead>
        <TitleRow>Untitled 1 - LibreOffice Writer</TitleRow>
        <WinButtons>
          <WinButton>
            <svg width="13" height="13" viewBox="0 0 13 13">
              <path d="M2 6.5h9" stroke="#3f3e3a" strokeWidth="2" />
            </svg>
          </WinButton>
          <WinButton>
            <svg width="13" height="13" viewBox="0 0 13 13">
              <rect x="2" y="3" width="9" height="7" rx="1" fill="none" stroke="#3f3e3a" strokeWidth="1.5" />
            </svg>
          </WinButton>
          <WinButton $close>
            <svg width="13" height="13" viewBox="0 0 13 13">
              <path d="M3 3l7 7M10 3l-7 7" stroke="#5a1a08" strokeWidth="2" />
            </svg>
          </WinButton>
        </WinButtons>
        <MenuRow>
          {["File", "Edit", "View", "Insert", "Format", "Styles", "Table", "Form", "Tools", "Window", "Help"].map((m) => (
            <span key={m}>{m}</span>
          ))}
        </MenuRow>
        <CloseTab>✕</CloseTab>
      </WindowHead>

      <ToolRow items={ROW_ONE} height={54} />
      <ToolRow items={ROW_TWO} height={56} />

      <Lower>
        <MainColumn>
          <RulerRow>
            <TabCorner />
            <Ruler />
          </RulerRow>
          <DocArea>
            <Page $h={510}>
              <PageText $top={-24} $clip>
                <Line>Car IS-A vehicle</Line>
                <Line />
                <Line>HAS- A -&gt; Association</Line>
                <Line />
                <Line>class Student {"{"}</Line>
                <Line $indent>string name;</Line>
                <Line $indent>int rollno;</Line>
                <Line>{"}"}</Line>
              </PageText>
              <CropMark $x={80} $y={412} $sides={["top", "right"]} />
              <CropMark $x={910} $y={412} $sides={["top", "left"]} />
            </Page>
            <Page $h={600}>
              <CropMark $x={80} $y={82} $sides={["bottom", "right"]} />
              <CropMark $x={910} $y={82} $sides={["bottom", "left"]} />
              <PageText $top={100}>
                <Line>Student HAS-A name</Line>
                <Line>Student HAS-A rollno</Line>
              </PageText>
              <TextCursor>
                <svg width="10" height="22" viewBox="0 0 10 22">
                  <path d="M1 1h8M5 1v20M1 21h8" stroke="#fff" strokeWidth="3.5" />
                  <path d="M1 1h8M5 1v20M1 21h8" stroke="#222" strokeWidth="1.5" />
                </svg>
              </TextCursor>
            </Page>
            <OrangeThumb />
          </DocArea>
        </MainColumn>
        <Sidebar />
      </Lower>

      <ToolRow items={FIND_ROW} height={54} />

      <StatusBar>
        <StatusCell $first $pad={14}>Page 3 of 3</StatusCell>
        <StatusCell $pad={11}>88 words, 477 characters</StatusCell>
        <StatusCell $pad={11}>Default Style</StatusCell>
        <StatusCell $center>English (India)</StatusCell>
        <StatusCell />
        <StatusCell $center>
          <svg width="20" height="18" viewBox="0 0 20 18">
            <rect x="0" y="5" width="13" height="10" fill="#8e8e88" />
            <path d="M15 2h4M17 2v14M15 16h4" stroke="#777" strokeWidth="1.3" />
          </svg>
        </StatusCell>
        <StatusCell $center>
          <svg width="18" height="20" viewBox="0 0 18 20">
            <path d="M12 2H2v16h10" fill="none" stroke="#888" strokeWidth="1.3" />
            <path d="M11 5l1.5 3 3.5.5-2.500 2.500.6 3.500-3.100-1.700-3.100 1.700.6-3.500L6 8.500 9.500 8z" fill="#c81e2c" />
          </svg>
        </StatusCell>
        <StatusCell />
        <StatusCell />
        <StatusCell $center>
          <svg width="78" height="20" viewBox="0 0 78 20">
            <path d="M1 3h7l4 4v10H1z" fill="none" stroke="#333" strokeWidth="1.4" />
            <path d="M20 3h8l2 3v11H20zM32 3h7l3 3v11H32z" fill="none" stroke="#8a8a84" strokeWidth="1.3" />
            <path d="M54 5h9v12H52zM63 3h8l4 4v10H63z" fill="none" stroke="#8a8a84" strokeWidth="1.3" />
          </svg>
        </StatusCell>
        <StatusCell>
          <svg width="200" height="20" viewBox="0 0 200 20">
            <path d="M16 10h10" stroke="#777" strokeWidth="2.5" />
            <path d="M35 10h136M56 3v14M103 3v14" stroke="#9b9b95" strokeWidth="1.4" />
            <circle cx="94" cy="10" r="5.5" fill="#f7f7f4" stroke="#8d8d87" strokeWidth="1.5" />
            <path d="M179 10h12M185 4v12" stroke="#777" strokeWidth="2.5" />
          </svg>
        </StatusCell>
        <StatusCell $pad={12}>90%</StatusCell>
      </StatusBar>
    </Screen>
  );
}
